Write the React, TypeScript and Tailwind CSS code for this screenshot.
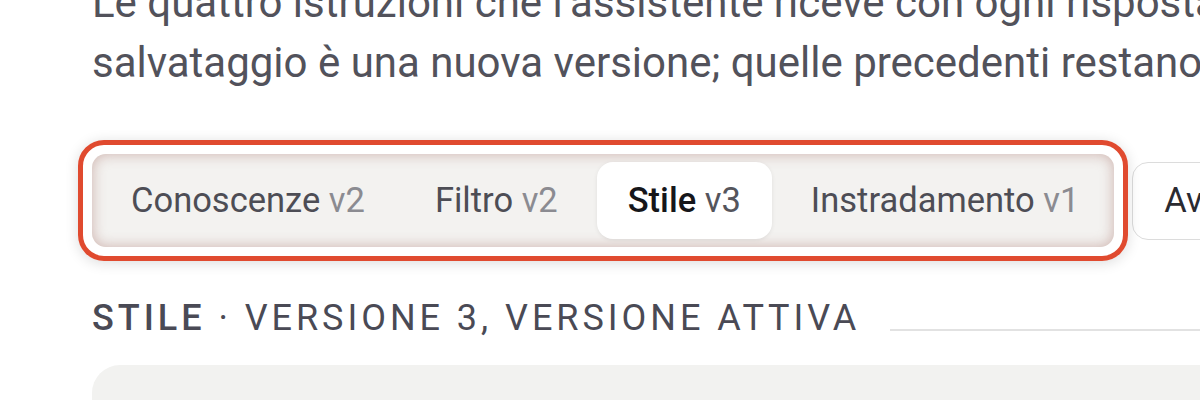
import React from 'react';

type Tab = { name: string; version: string; active?: boolean };

const tabs: Tab[] = [
  { name: 'Conoscenze', version: 'v2' },
  { name: 'Filtro', version: 'v2' },
  { name: 'Stile', version: 'v3', active: true },
  { name: 'Instradamento', version: 'v1' },
];

function TabBar() {
  return (
    <div className="relative shrink-0">
      {/* highlight ring */}
      <span className="pointer-events-none absolute -inset-[14px] rounded-[26px] border-[5px] border-[#e04a2f] shadow-[0_2px_14px_rgba(0,0,0,0.14)]" />
      <div className="flex items-center gap-[8px] rounded-[14px] bg-[#f3f2f0] p-[8px] pr-[4px] shadow-[inset_0_0_14px_rgba(160,100,90,0.45)]">
        {tabs.map((t) => (
          <button
            key={t.name}
            type="button"
            className={
              t.active
                ? 'h-[77px] rounded-[16px] bg-white px-[31px] text-[34.5px] shadow-[0_1px_4px_rgba(0,0,0,0.08)]'
                : 'h-[77px] rounded-[16px] px-[31px] text-[34.5px]'
            }
          >
            <span className={t.active ? 'font-medium text-[#16161a]' : 'text-[#4d4d55]'}>{t.name}</span>{' '}
            <span className={t.active ? 'text-[#55555c]' : 'text-[#8b8b91]'}>{t.version}</span>
          </button>
        ))}
      </div>
    </div>
  );
}

export default function App() {
  return (
    <div
      className="h-[400px] w-[1200px] overflow-hidden bg-white pl-[92px]"
      style={{ fontFamily: 'Roboto, "Noto Sans", sans-serif' }}
    >
      <p className="-mt-[27px] whitespace-nowrap text-[42px] leading-[60px] text-[#52525b]">
        Le quattro istruzioni che l’assistente riceve con ogni risposta. Ogni
        <br />
        salvataggio è una nuova versione; quelle precedenti restano consultabili.
      </p>

      <div className="mt-[61px] flex items-center gap-[18px]">
        <TabBar />
        <button
          type="button"
          className="h-[78px] shrink-0 whitespace-nowrap rounded-[16px] border-[1.5px] border-[#dcdcdc] bg-white px-[31px] text-[34.5px] text-[#2a2a30]"
        >
          Avanzate
        </button>
      </div>

      <div className="mt-[50px] flex items-end gap-[30px]">
        <h3 className="shrink-0 text-[36px] leading-[42px] uppercase tracking-[0.11em] text-[#4a4a55]">
          <span className="font-medium">Stile</span> · Versione 3, versione attiva
        </h3>
        <div className="mb-[8px] h-[2px] flex-1 bg-[#e2e2e2]" />
      </div>

      <div className="mt-[26px] h-[200px] rounded-tl-[28px] bg-[#f2f2f0]" />
    </div>
  );
}
